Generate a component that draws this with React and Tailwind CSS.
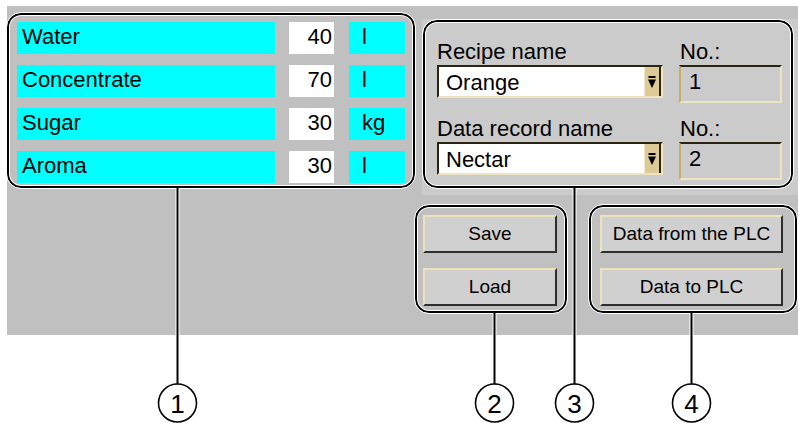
import React from 'react';

const rows = [
  { name: 'Water', value: 40, unit: 'l' },
  { name: 'Concentrate', value: 70, unit: 'l' },
  { name: 'Sugar', value: 30, unit: 'kg' },
  { name: 'Aroma', value: 30, unit: 'l' },
];

const recipes = [
  { label: 'Recipe name', value: 'Orange', no: 1 },
  { label: 'Data record name', value: 'Nectar', no: 2 },
];

const callouts = [
  { x: 177.5, from: 188, n: 1 },
  { x: 494.5, from: 313, n: 2 },
  { x: 574.5, from: 188, n: 3 },
  { x: 691.5, from: 313, n: 4 },
];

// black callout frame with a thin white line on both sides
const frame = 'border-2 border-black outline outline-white shadow-[inset_0_0_0_1px_#fff]';

function DropArrow() {
  return (
    <svg width="8" height="12" viewBox="0 0 8 12">
      <rect x="0.5" y="0" width="7" height="2" fill="#000" />
      <polygon points="0,3.5 8,3.5 4,12" fill="#000" />
    </svg>
  );
}

function Dropdown({ value }) {
  return (
    <div className="mt-[2px] h-[33px] flex bg-white border-t-2 border-l-2 border-t-[#2a2410] border-l-[#2a2410] border-b-2 border-r-2 border-b-[#efe4c2] border-r-[#efe4c2]">
      <div className="flex-1 pl-[7px] pt-[1px] leading-[29px]">{value}</div>
      <div className="w-[17px] h-full flex items-center justify-center bg-[#dccb96] border-r-2 border-r-[#2a2410] border-l border-l-[#f3e9c9]">
        <DropArrow />
      </div>
    </div>
  );
}

function NumberField({ value }) {
  return (
    <div className="mt-[2px] h-[38px] bg-[#cbcbcb] border-t-2 border-t-[#2a2410] border-l-2 border-l-[#c9ae62] border-b-2 border-b-[#efe4c2] border-r-2 border-r-[#efe4c2] pl-[8px] leading-[30px]">
      {value}
    </div>
  );
}

function PanelButton({ children, className }) {
  return (
    <button
      type="button"
      className={`h-[38px] bg-[#d0d0d0] text-[19px] text-black border-t-2 border-l-2 border-t-[#efe2b8] border-l-[#efe2b8] border-b-2 border-r-2 border-b-[#2e2e2e] border-r-[#2e2e2e] ${className}`}
    >
      {children}
    </button>
  );
}

export default function App() {
  return (
    <div className="relative w-[798px] h-[423px] bg-white overflow-hidden font-['Liberation_Sans',Arial,sans-serif] text-black">
      <div className="ml-[7px] mt-[6px] w-[791px] h-[329px] bg-[#c0c0c0] flex">
        {/* recipe entries */}
        <div className={`w-[408px] h-[175px] mt-[7px] rounded-[14px] ${frame} pt-[7px] pl-[8px] flex flex-col gap-[11px]`}>
          {rows.map((r) => (
            <div key={r.name} className="flex h-[32px] text-[22px] leading-[30px]">
              <div className="w-[258px] bg-[#00ffff] pl-[5px]">{r.name}</div>
              <div className="w-[45px] ml-[14px] bg-white text-right pr-[2px]">{r.value}</div>
              <div className="w-[56px] ml-[15px] bg-[#00ffff] pl-[13px]">{r.unit}</div>
            </div>
          ))}
        </div>

        <div className="flex flex-col">
          <div className="ml-[7px] mt-[13px] w-[376px] h-[176px] bg-[#cbcbcb] pl-[1px] pt-[1px]">
            <div className={`w-[370px] h-[168px] rounded-[14px] ${frame} pl-[12px] pt-[19px] text-[22px]`}>
              {recipes.map((rc, i) => (
                <div key={rc.label} className={`flex gap-[16px] ${i > 0 ? 'mt-[15px]' : ''}`}>
                  <div className="w-[226px]">
                    <div className="h-[22px] leading-[22px]">{rc.label}</div>
                    <Dropdown value={rc.value} />
                  </div>
                  <div className="w-[103px]">
                    <div className="h-[22px] leading-[22px] pl-[1px]">No.:</div>
                    <NumberField value={rc.no} />
                  </div>
                </div>
              ))}
            </div>
          </div>

          <div className="flex gap-[22px] mt-[10px]">
            <div className={`w-[152px] h-[108px] rounded-[14px] ${frame} pl-[6px] pt-[8px] flex flex-col gap-[15px]`}>
              <PanelButton className="w-[134px]">Save</PanelButton>
              <PanelButton className="w-[134px]">Load</PanelButton>
            </div>
            <div className={`w-[208px] h-[108px] rounded-[14px] ${frame} pl-[9px] pt-[8px] flex flex-col gap-[15px]`}>
              <PanelButton className="w-[183px]">Data from the PLC</PanelButton>
              <PanelButton className="w-[183px]">Data to PLC</PanelButton>
            </div>
          </div>
        </div>
      </div>

      {/* callout leaders and numbers */}
      <svg className="absolute inset-0 pointer-events-none" width="798" height="423" viewBox="0 0 798 423">
        {callouts.map((c) => (
          <g key={c.n}>
            <line x1={c.x} y1={c.from} x2={c.x} y2="335" stroke="#fff" strokeWidth="4" />
            <line x1={c.x} y1={c.from} x2={c.x} y2="384" stroke="#000" strokeWidth="2" />
            <circle cx={c.x} cy="403" r="19" fill="#fff" stroke="#000" strokeWidth="1.6" />
            <text
              x={c.x}
              y="412.5"
              textAnchor="middle"
              fontSize="26"
              fontFamily="'Liberation Sans', Arial, sans-serif"
              fill="#000"
            >
              {c.n}
            </text>
          </g>
        ))}
      </svg>
    </div>
  );
}
